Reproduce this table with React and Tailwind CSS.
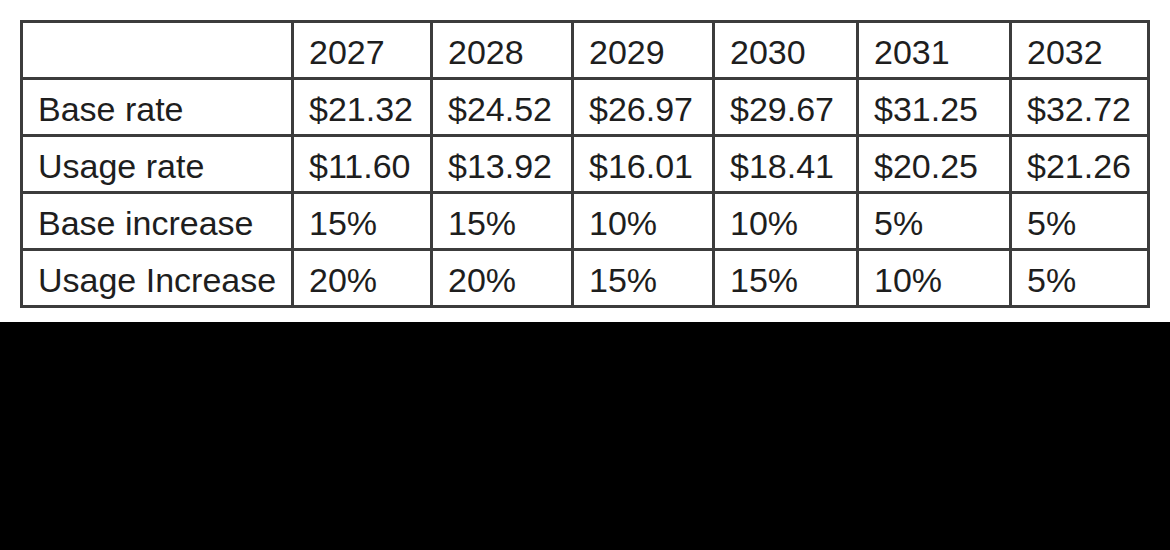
const headers = ['', '2027', '2028', '2029', '2030', '2031', '2032'];

const rows = [
    ['Base rate', '$21.32', '$24.52', '$26.97', '$29.67', '$31.25', '$32.72'],
    ['Usage rate', '$11.60', '$13.92', '$16.01', '$18.41', '$20.25', '$21.26'],
    ['Base increase', '15%', '15%', '10%', '10%', '5%', '5%'],
    ['Usage Increase', '20%', '20%', '15%', '15%', '10%', '5%'],
];

const Cell = ({ children }) => (
    <div className="flex h-[57px] items-center border-r-[3px] border-b-[3px] border-[#3c3c3c] pt-[4px] pl-[15px] text-[34px] leading-none text-[#1e1e1e]">
        {children}
    </div>
);

const App = () => {
    return (
        <div className="flex h-[550px] w-[1170px] flex-col bg-white" style={{ fontFamily: '"Liberation Sans", Arial, sans-serif' }}>
            <div className="h-[322px] pt-[20px] pl-[20px]">
                <div className="grid w-max grid-cols-[271px_139px_141px_141px_144px_153px_138px] border-t-[3px] border-l-[3px] border-[#3c3c3c]">
                    {headers.map((h, i) => (
                        <Cell key={'h' + i}>{h}</Cell>
                    ))}
                    {rows.map((row, r) =>
                        row.map((v, c) => <Cell key={r + '-' + c}>{v}</Cell>)
                    )}
                </div>
            </div>
            <div className="flex-1 bg-black" />
        </div>
    );
};

export default App;
